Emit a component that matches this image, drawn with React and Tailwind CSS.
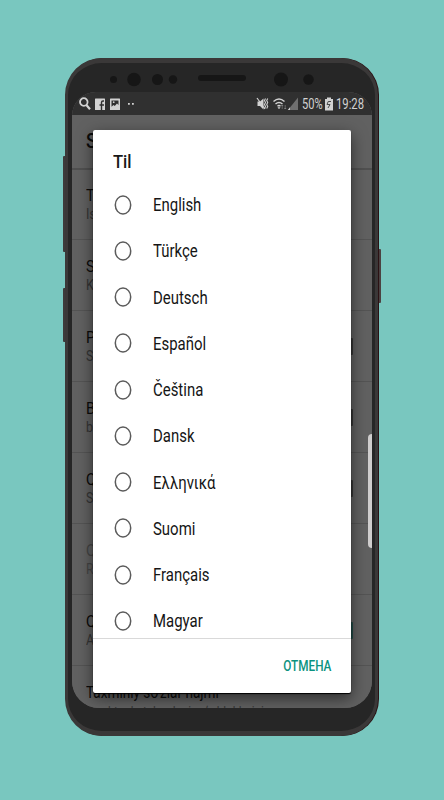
import clsx from 'clsx';

const languages = ['English', 'Türkçe', 'Deutsch', 'Español', 'Čeština', 'Dansk', 'Ελληνικά', 'Suomi', 'Français', 'Magyar'];

const settings = [
  { title: 'T', text: 'Is' },
  { title: 'S', text: 'K' },
  { title: 'P', text: 'S', box: 'bg-[#353535]' },
  { title: 'B', text: 'b', box: 'bg-[#353535]' },
  { title: 'Q', text: 'S', box: 'bg-[#353535]' },
  { title: 'Q', text: 'R', disabled: true },
  { title: 'Q', text: 'A', box: 'bg-[#214a45]' },
];

function StatusBar() {
  return (
    <div className="flex h-[23px] shrink-0 items-center bg-[#303030] pl-[7px] pr-[8px] text-[#d2d2d2]">
      <svg width="60" height="16" viewBox="0 0 60 16" fill="currentColor">
        <circle cx="4.800" cy="6" r="3.800" fill="none" stroke="currentColor" strokeWidth="1.800" />
        <path d="M7.400 9 11 13.300" stroke="currentColor" strokeWidth="2.200" />
        <rect x="16" y="2.500" width="10" height="11.500" rx=".5" />
        <path d="M25 5h-1q-1.500 0-1.500 1.600V14M20.500 9H25" fill="none" stroke="#303030" strokeWidth="1.400" />
        <rect x="31" y="2.500" width="10" height="11.500" rx=".5" />
        <path d="M32.500 4.500h7V9L38 7.500l-2.200 2.600L34.500 9l-2 1.800z" fill="#303030" />
        <circle cx="34.700" cy="6.200" r=".9" />
        <path d="M49 7h1.800v1.800H49zM53 7h1.800v1.800H53z" />
      </svg>
      <svg className="ml-auto" width="43" height="16" viewBox="0 0 43 16" fill="none" stroke="currentColor">
        <path d="M1.500 5.500H4L7.500 2.500v11L4 10H1.500z" fill="currentColor" stroke="none" />
        <path d="m1 2 8 11" strokeWidth="1.200" />
        <path d="m9.500 2.500-1 2 1 2-1 2 1 2-1 2M11.700 2.500l-1 2 1 2-1 2 1 2-1 2" strokeWidth="1.100" />
        <path d="M17.500 5.500q5.500-5 11 0M19.500 8q3.500-3 7 0M21.500 10.300q1.500-1.400 3 0" strokeWidth="1.400" />
        <path d="m21.500 11.300 1.500 1.900 1.500-1.900z" fill="currentColor" stroke="none" />
        <path d="M26.200 13V9m-1 1 1-1 1 1M29.200 9v4m-1-1 1 1 1-1" strokeWidth=".7" opacity=".5" />
        <path d="M42 1.500V14H32z" fill="#707070" stroke="none" />
        <path d="M34 11.300V14h-2.200z" fill="currentColor" stroke="none" />
      </svg>
      <span className="ml-[3px] w-[20px]"><span className="block origin-left scale-x-[.74] whitespace-nowrap text-[15px] leading-4">50%</span></span>
      <svg className="ml-[3px]" width="8" height="14" viewBox="0 0 8 14">
        <path d="M2 .5h4V2h2v11.500H0V2h2z" fill="currentColor" />
        <path d="M6 4.500H3.200L2 7.500h3L3 11" fill="none" stroke="#4a4a4a" />
      </svg>
      <span className="ml-[3px] w-[28px]"><span className="block origin-left scale-x-[.75] whitespace-nowrap text-[15px] leading-4">19:28</span></span>
    </div>
  );
}

function SettingRow({ item }) {
  return (
    <div className={clsx('flex h-[71px] shrink-0 items-center justify-between border-b border-[#545454] pl-[14px] pr-[19px]', item.disabled ? 'text-[#454545]' : 'text-[#0b0b0b]')}>
      <div className="origin-left scale-x-[.86] pt-px">
        <div className="text-[17px] leading-5">{item.title}</div>
        <div className={clsx('text-[14.500px] leading-5', !item.disabled && 'text-[#353535]')}>{item.text}</div>
      </div>
      {item.box && <span className={clsx('h-[17px] w-4 rounded-[1px]', item.box)} />}
    </div>
  );
}

function SettingsPage() {
  return (
    <div className="flex min-h-0 flex-1 flex-col bg-[#616161]">
      <div className="flex h-[55px] shrink-0 items-center border-b-2 border-[#505050] pl-[14px]">
        <span className="origin-left scale-x-[.86] text-[21px] font-medium text-[#0b0b0b]">S</span>
      </div>
      <div className="-mt-px flex flex-col">
        {settings.map((item, i) => <SettingRow key={i} item={item} />)}
      </div>
      <div className="w-[240px] whitespace-nowrap pl-[14px] pt-[16px] text-[#0b0b0b]">
        <div className="w-fit origin-left scale-x-[.8] text-[17px] leading-5">Taxminiy so‘zlar hajmi</div>
        <div className="w-fit origin-left scale-x-[.8] text-[14.500px] leading-[22px] text-[#353535]">xarakter katalogdagi so‘z bloklarini</div>
      </div>
    </div>
  );
}

function LanguageDialog() {
  return (
    <div className="absolute left-[21px] top-[38px] flex h-[563px] w-[258px] flex-col rounded-[2px] bg-white shadow-[0_1px_1px_#000,0_5px_16px_rgba(0,0,0,.55)]">
      <h1 className="h-[51px] pl-[20px] pt-[18px] text-[19px] font-medium leading-7 text-[#171717]">
        <span className="inline-block origin-left scale-x-[.87]">Til</span>
      </h1>
      <div className="flex h-[457px] flex-col overflow-hidden pt-[.5px]">
        {languages.map((name) => (
          <div key={name} className="flex h-[46.250px] shrink-0 items-center pl-[21px]">
            <svg width="18" height="20" viewBox="0 0 18 20" fill="none">
              <ellipse cx="9" cy="10" rx="7.700" ry="9" stroke="#5b5b5b" strokeWidth="1.500" />
            </svg>
            <span className="ml-[21px] origin-left scale-x-[.83] pt-px text-[18px] leading-6 text-[#151515]">{name}</span>
          </div>
        ))}
      </div>
      <div className="flex flex-1 items-center justify-end border-t border-[#d9d9d9] pr-[20px] pt-[2px]">
        <button className="origin-right scale-x-[.81] text-[14.500px] font-medium leading-5 text-[#0b9280]">ОТМЕНА</button>
      </div>
    </div>
  );
}

export default function App() {
  return (
    <div className="relative h-[800px] w-[444px] overflow-hidden bg-[#79c7bf] font-['Roboto','Noto_Sans',sans-serif]">
      {/* side buttons */}
      <span className="absolute left-[63px] top-[156px] h-[96px] w-1 rounded-l-[1px] bg-[#3d3b3b]" />
      <span className="absolute left-[63px] top-[288px] h-[54px] w-1 rounded-l-[1px] bg-[#3d3b3b]" />
      <span className="absolute left-[377px] top-[249px] h-[54px] w-1 rounded-r-[1px] bg-[#4b4242]" />
      <div className="relative ml-[65px] mt-[58px] h-[678px] w-[313px] rounded-[37px] border-x-[3px] border-y-[5px] border-[#3a3838] bg-[#262626] px-1 pt-[29px] shadow-[1px_0_0_#2b1214]">
        {/* sensors and speaker */}
        <svg className="absolute left-0 top-0" width="307" height="30" fill="#161616">
          <circle cx="45.500" cy="16.500" r="3.500" />
          <circle cx="66" cy="16.500" r="6.800" />
          <circle cx="89.500" cy="16.500" r="5.500" />
          <circle cx="105" cy="16.500" r="4.200" />
          <rect x="130" y="12" width="48" height="6" rx="3" />
          <circle cx="213" cy="16.500" r="7" />
          <circle cx="240.500" cy="16.500" r="5.200" />
        </svg>
        <div className="relative flex h-[616px] w-[300px] flex-col overflow-hidden rounded-t-[24px] rounded-b-[27px] bg-[#616161]">
          <StatusBar />
          <SettingsPage />
          <LanguageDialog />
          <span className="absolute right-0 top-[342px] h-[114px] w-1 rounded-l-[4px] bg-[#cfcdcd]" />
        </div>
      </div>
    </div>
  );
}
